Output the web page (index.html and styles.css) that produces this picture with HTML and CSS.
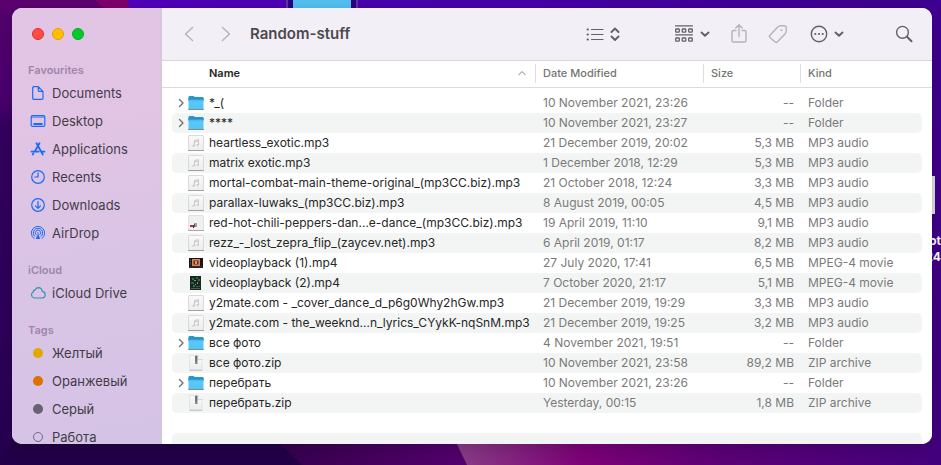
FILE: index.html
```html
<!DOCTYPE html>
<html lang="en">
<head>
<meta charset="utf-8">
<title>Random-stuff</title>
<link rel="stylesheet" href="styles.css">
</head>
<body>
<svg class="wallpaper" viewBox="0 0 941 465" preserveAspectRatio="none" aria-hidden="true">
  <defs>
    <linearGradient id="left" x1="0" y1="0" x2="0" y2="1">
      <stop offset="0" stop-color="#56006f"/><stop offset=".22" stop-color="#4a006e"/><stop offset=".27" stop-color="#34005f"/><stop offset=".8" stop-color="#2c0058"/><stop offset="1" stop-color="#25004f"/>
    </linearGradient>
    <linearGradient id="right" x1="0" y1="0" x2="0" y2="1">
      <stop offset="0" stop-color="#3f0092"/><stop offset="1" stop-color="#42007e"/>
    </linearGradient>
    <linearGradient id="top" x1="0" y1="0" x2="1" y2="0">
      <stop offset="0" stop-color="#5200bd"/><stop offset=".5" stop-color="#4600aa"/><stop offset="1" stop-color="#3e008c"/>
    </linearGradient>
    <linearGradient id="dusk" x1="0" y1="0" x2="1" y2="0">
      <stop offset="0" stop-color="#35004e"/><stop offset="1" stop-color="#55006f"/>
    </linearGradient>
    <linearGradient id="bottom" x1="0" y1="0" x2="1" y2="0">
      <stop offset="0" stop-color="#8a3f88"/><stop offset=".27" stop-color="#7d0078"/><stop offset=".55" stop-color="#5c0078"/><stop offset="1" stop-color="#44007e"/>
    </linearGradient>
  </defs>
  <rect width="941" height="465" fill="url(#left)"/>
  <path d="M0 0H100L110 9H0Z" fill="#5c0070"/>
  <path d="M95 0H130L134 9H105Z" fill="#80006c"/>
  <path d="M127 0H941V20H134Z" fill="url(#top)"/>
  <path d="M915 0H941V465H915Z" fill="url(#right)"/>
  <path d="M12 440H280L305 465H0Z" fill="#230048"/>
  <path d="M276 440H470V465H302Z" fill="url(#dusk)"/>
  <path d="M455 440H941V465H467Z" fill="url(#bottom)"/>
</svg>
<div class="desktop-folder" aria-hidden="true"></div>
<div class="desktop-file" aria-hidden="true"><span class="thumb"></span><span>ot</span><span>24</span></div>

<svg class="symbols" aria-hidden="true">
  <defs>
    <linearGradient id="folderFill" x1="0" y1="0" x2="0" y2="1"><stop offset="0" stop-color="#3fb4ea"/><stop offset=".3" stop-color="#5ac9fa"/><stop offset="1" stop-color="#54c2f5"/></linearGradient>
    <linearGradient id="paper" x1="0" y1="0" x2="0" y2="1"><stop offset="0" stop-color="#fafafa"/><stop offset="1" stop-color="#ececec"/></linearGradient>
  </defs>
  <symbol id="folder" viewBox="0 0 16 16">
    <path d="M.5 2.200Q.5 1 1.500 1H5.500L7 2H14.500Q15.500 2 15.500 3V6H.5Z" fill="#2a98cf"/>
    <path d="M.5 4H15.500V14Q15.500 14.500 15 14.500H1Q.5 14.500 .5 14Z" fill="url(#folderFill)"/>
    <path d="M.5 4H15.500" stroke="#2187bd" fill="none"/>
    <path d="M.5 14.500H15.500" stroke="#788f9c" fill="none"/>
  </symbol>
  <symbol id="audio" viewBox="0 0 16 16">
    <rect x=".5" y=".5" width="15" height="15" rx=".8" fill="url(#paper)" stroke="#dadada"/>
    <path d="M.5 15.500H15.500" stroke="#a0a0a0"/>
    <path d="M6.500 10.500V5.500L10.500 4.700V9.700M6.500 6.800L10.500 6" fill="none" stroke="#c9c9c9"/>
    <ellipse cx="5.600" cy="10.700" rx="1.200" ry=".9" fill="#c9c9c9"/><ellipse cx="9.600" cy="9.900" rx="1.200" ry=".9" fill="#c9c9c9"/>
  </symbol>
  <symbol id="cover" viewBox="0 0 16 16">
    <rect x=".5" y=".5" width="15" height="15" rx=".8" fill="#f2efef" stroke="#e2e0e0"/>
    <path d="M.5 15.500H15.500" stroke="#a8a8a8"/>
    <rect x="2" y="10" width="3" height="2" fill="#b02a61"/><rect x="5" y="10" width="1" height="3" fill="#40363d"/><rect x="6" y="8" width="3" height="4" fill="#9ea1a2"/><rect x="6" y="9" width="1" height="3" fill="#50565a"/>
  </symbol>
  <symbol id="movie" viewBox="0 0 16 16">
    <rect x="1" y="3" width="14" height="10" fill="#1c1513"/><rect x="4" y="4" width="8" height="7" fill="#d78457"/><rect x="5.500" y="5.500" width="5" height="4" fill="#5c3328"/><rect x="7" y="6" width="2" height="3" fill="#c99a82"/><rect x="1" y="11" width="14" height="2" fill="#3b211c"/><rect x="2" y="4" width="1" height="6" fill="#493b37"/>
  </symbol>
  <symbol id="movieGreen" viewBox="0 0 16 16">
    <rect x="2" y="1" width="11" height="14" fill="#14291f"/><path d="M4 3h2v2H4zM10 4h2v2h-2zM5 10h2v2H5z" fill="#316f46"/><path d="M6 5h2v1H6zM9 7h1v2H9zM7 9h1v1H7z" fill="#b58545"/><path d="M3 7h3v2H3zM8 11h4v1H8zM8 2h2v2H8z" fill="#24605d"/><path d="M3 13h9v1H3z" fill="#525f40"/>
  </symbol>
  <symbol id="zip" viewBox="0 0 16 16">
    <path d="M2 .5H10L14 4.500V15H2Z" fill="url(#paper)" stroke="#e2e2e2"/>
    <path d="M10 .5V4.500H14" fill="#fff" stroke="#d6d6d6"/><path d="M2 15.300H14" stroke="#c0c0c0"/>
    <rect x="7" y="1" width="2.500" height="8" fill="#858b90"/><path d="M8.200 1V7" stroke="#4e555a" stroke-dasharray="1 1"/>
  </symbol>
</svg>

<main class="window">
  <aside class="sidebar">
    <div class="lights">
      <button class="light close" aria-label="Close"></button>
      <button class="light minimise" aria-label="Minimise"></button>
      <button class="light zoom" aria-label="Zoom"></button>
    </div>
    <nav aria-label="Sidebar">
      <h2>Favourites</h2>
      <ul>
        <li><a href="#"><svg class="side-icon" viewBox="0 0 16 16"><path d="M3.700 1.700H8.300L13 6.400V13.300Q13 14.300 12 14.300H3.700Q2.700 14.300 2.700 13.300V2.700Q2.700 1.700 3.700 1.700ZM8.300 1.700V5.400Q8.300 6.400 9.300 6.400H13"/></svg>Documents</a></li>
        <li><a href="#"><svg class="side-icon" viewBox="0 0 16 16"><rect x="1.200" y="2.600" width="13.600" height="10.800" rx="1.200"/><path d="M1.700 4.200H14.300" stroke-opacity=".7"/><path d="M4.200 11H11.800" stroke-width="2"/></svg>Desktop</a></li>
        <li><a href="#"><svg class="side-icon" viewBox="0 0 16 16"><path d="M6.500 2.200L12.800 13.500M9.500 2.200L4.600 10.600M3.400 12.600L2.800 13.500M1.500 10.600H8.700M11.600 10.600H14.500" stroke-width="1.800"/></svg>Applications</a></li>
        <li><a href="#"><svg class="side-icon" viewBox="0 0 16 16"><circle cx="8" cy="8" r="6.300"/><path d="M8 3.800V8H4.800"/></svg>Recents</a></li>
        <li><a href="#"><svg class="side-icon" viewBox="0 0 16 16"><circle cx="8" cy="8" r="6.300"/><path d="M8 4.500V11.300M5.500 8.800L8 11.300L10.500 8.800"/></svg>Downloads</a></li>
        <li><a href="#"><svg class="side-icon" viewBox="0 0 16 16"><path d="M4 13.500A6.700 6.700 0 1 1 12 13.500M4.800 11.400A4.700 4.700 0 1 1 11.200 11.400M6 9.600A2.700 2.700 0 1 1 10 9.600" stroke-width="1"/><path d="M8 8.500L5.800 14H10.200Z" class="solid"/><circle cx="8" cy="8" r=".8" class="solid"/></svg>AirDrop</a></li>
      </ul>
      <h2>iCloud</h2>
      <ul>
        <li><a href="#"><svg class="side-icon cloud" viewBox="0 0 16 16"><path d="M4 13A3.200 3.200 0 0 1 3.300 7Q3.200 4.900 5.200 4.800Q6.300 2.700 8.500 2.700Q11.900 2.900 12.200 6.300Q15.300 6.700 15.300 9.800Q15 12.800 12.300 13Z"/></svg>iCloud Drive</a></li>
      </ul>
      <h2>Tags</h2>
      <ul>
        <li><a href="#"><span class="tag yellow"></span>Желтый</a></li>
        <li><a href="#"><span class="tag orange"></span>Оранжевый</a></li>
        <li><a href="#"><span class="tag grey"></span>Серый</a></li>
        <li><a href="#"><span class="tag hollow"></span>Работа</a></li>
      </ul>
    </nav>
  </aside>

  <section class="content">
    <header class="toolbar">
      <div class="history">
        <button class="tool" aria-label="Back"><svg class="faint" width="10" height="16" viewBox="0 0 10 16"><path d="M8.500 1.500L1.500 8L8.500 14.500"/></svg></button>
        <button class="tool" aria-label="Forward"><svg class="faint" width="10" height="16" viewBox="0 0 10 16"><path d="M1.500 1.500L8.500 8L1.500 14.500"/></svg></button>
      </div>
      <h1>Random-stuff</h1>
      <div class="actions">
        <button class="tool view" aria-label="View as list">
          <svg width="18" height="14" viewBox="0 0 18 14"><path d="M5.500 2.500H17M5.500 7.500H17M5.500 12.500H17" stroke-width="1.200"/><path d="M1.500 2.500H2M1.500 7.500H2M1.500 12.500H2" stroke-width="1.800"/></svg>
          <svg width="10" height="14" viewBox="0 0 10 14"><path d="M1.500 5L5 1.500L8.500 5M1.500 9.500L5 13L8.500 9.500" stroke-width="1.900"/></svg>
        </button>
        <button class="tool group" aria-label="Group items">
          <svg width="20" height="18" viewBox="0 0 20 18"><path d="M1.500 .8H18.500M1.500 9.800H18.500" stroke-width="1.200"/><g stroke-width="1.300"><rect x="1.700" y="4" width="3.600" height="3.200" rx=".7"/><rect x="8.200" y="4" width="3.600" height="3.200" rx=".7"/><rect x="14.700" y="4" width="3.600" height="3.200" rx=".7"/><rect x="1.700" y="13" width="3.600" height="3.200" rx=".7"/><rect x="8.200" y="13" width="3.600" height="3.200" rx=".7"/><rect x="14.700" y="13" width="3.600" height="3.200" rx=".7"/></g></svg>
          <svg width="10" height="8" viewBox="0 0 10 8"><path d="M1.500 2.500L5 5.700L8.500 2.500" stroke-width="1.900"/></svg>
        </button>
        <button class="tool share" aria-label="Share"><svg class="faint" width="16" height="20" viewBox="0 0 16 20"><path d="M5 6.500H2.300Q1 6.500 1 7.800V16.700Q1 18 2.300 18H13.700Q15 18 15 16.700V7.800Q15 6.500 13.700 6.500H11M8 12.500V1M4.800 4L8 .8L11.200 4"/></svg></button>
        <button class="tool tags" aria-label="Edit tags"><svg class="faint" width="20" height="20" viewBox="0 0 20 20"><path d="M1.800 11.500L9.800 3Q11 1.700 12.700 1.700H16.200Q18.200 1.700 18.200 3.700V7Q18.200 8.700 17 9.900L9.200 18Q8.200 19 7.200 18L1.900 13.500Q.9 12.500 1.800 11.500Z"/><circle cx="13.500" cy="6.300" r="1" class="solid"/></svg></button>
        <button class="tool more" aria-label="More actions">
          <svg width="18" height="18" viewBox="0 0 18 18"><circle cx="9" cy="9" r="7.700"/><circle cx="5.300" cy="9" r="1.100" class="solid"/><circle cx="9" cy="9" r="1.100" class="solid"/><circle cx="12.700" cy="9" r="1.100" class="solid"/></svg>
          <svg width="10" height="8" viewBox="0 0 10 8"><path d="M1.500 2.500L5 5.700L8.500 2.500" stroke-width="1.900"/></svg>
        </button>
        <button class="tool search" aria-label="Search"><svg width="18" height="18" viewBox="0 0 18 18"><circle cx="7.500" cy="7.300" r="5.900"/><path d="M12 11.800L16.500 16.300" stroke-width="2"/></svg></button>
      </div>
    </header>

    <div class="listing">
      <table>
        <colgroup><col><col class="col-date"><col class="col-size"><col class="col-kind"></colgroup>
        <thead>
          <tr>
            <th scope="col" aria-sort="ascending"><span class="sorted">Name<svg width="8" height="6" viewBox="0 0 8 6"><path d="M.8 4.800L4 1.500L7.200 4.800"/></svg></span></th>
            <th scope="col">Date Modified</th><th scope="col">Size</th><th scope="col">Kind</th>
          </tr>
        </thead>
        <tbody>
          <tr><td><div class="name"><svg class="arrow" viewBox="0 0 6 10"><path d="M1.500 1.500L5 5L1.500 8.500"/></svg><svg class="file-icon"><use href="#folder"/></svg>*_(</div></td><td>10 November 2021, 23:26</td><td>--</td><td>Folder</td></tr>
          <tr><td><div class="name"><svg class="arrow" viewBox="0 0 6 10"><path d="M1.500 1.500L5 5L1.500 8.500"/></svg><svg class="file-icon"><use href="#folder"/></svg>****</div></td><td>10 November 2021, 23:27</td><td>--</td><td>Folder</td></tr>
          <tr><td><div class="name"><svg class="file-icon"><use href="#audio"/></svg>heartless_exotic.mp3</div></td><td>21 December 2019, 20:02</td><td>5,3 MB</td><td>MP3 audio</td></tr>
          <tr><td><div class="name"><svg class="file-icon"><use href="#audio"/></svg>matrix exotic.mp3</div></td><td>1 December 2018, 12:29</td><td>5,3 MB</td><td>MP3 audio</td></tr>
          <tr><td><div class="name"><svg class="file-icon"><use href="#audio"/></svg>mortal-combat-main-theme-original_(mp3CC.biz).mp3</div></td><td>21 October 2018, 12:24</td><td>3,3 MB</td><td>MP3 audio</td></tr>
          <tr><td><div class="name"><svg class="file-icon"><use href="#audio"/></svg>parallax-luwaks_(mp3CC.biz).mp3</div></td><td>8 August 2019, 00:05</td><td>4,5 MB</td><td>MP3 audio</td></tr>
          <tr><td><div class="name"><svg class="file-icon"><use href="#cover"/></svg>red-hot-chili-peppers-dan…e-dance_(mp3CC.biz).mp3</div></td><td>19 April 2019, 11:10</td><td>9,1 MB</td><td>MP3 audio</td></tr>
          <tr><td><div class="name"><svg class="file-icon"><use href="#audio"/></svg>rezz_-_lost_zepra_flip_(zaycev.net).mp3</div></td><td>6 April 2019, 01:17</td><td>8,2 MB</td><td>MP3 audio</td></tr>
          <tr><td><div class="name"><svg class="file-icon"><use href="#movie"/></svg>videoplayback (1).mp4</div></td><td>27 July 2020, 17:41</td><td>6,5 MB</td><td>MPEG-4 movie</td></tr>
          <tr><td><div class="name"><svg class="file-icon"><use href="#movieGreen"/></svg>videoplayback (2).mp4</div></td><td>7 October 2020, 21:17</td><td>5,1 MB</td><td>MPEG-4 movie</td></tr>
          <tr><td><div class="name"><svg class="file-icon"><use href="#audio"/></svg>y2mate.com - _cover_dance_d_p6g0Why2hGw.mp3</div></td><td>21 December 2019, 19:29</td><td>3,3 MB</td><td>MP3 audio</td></tr>
          <tr><td><div class="name"><svg class="file-icon"><use href="#audio"/></svg>y2mate.com - the_weeknd…n_lyrics_CYykK-nqSnM.mp3</div></td><td>21 December 2019, 19:25</td><td>3,2 MB</td><td>MP3 audio</td></tr>
          <tr><td><div class="name"><svg class="arrow" viewBox="0 0 6 10"><path d="M1.500 1.500L5 5L1.500 8.500"/></svg><svg class="file-icon"><use href="#folder"/></svg>все фото</div></td><td>4 November 2021, 19:51</td><td>--</td><td>Folder</td></tr>
          <tr><td><div class="name"><svg class="file-icon"><use href="#zip"/></svg>все фото.zip</div></td><td>10 November 2021, 23:58</td><td>89,2 MB</td><td>ZIP archive</td></tr>
          <tr><td><div class="name"><svg class="arrow" viewBox="0 0 6 10"><path d="M1.500 1.500L5 5L1.500 8.500"/></svg><svg class="file-icon"><use href="#folder"/></svg>перебрать</div></td><td>10 November 2021, 23:26</td><td>--</td><td>Folder</td></tr>
          <tr><td><div class="name"><svg class="file-icon"><use href="#zip"/></svg>перебрать.zip</div></td><td>Yesterday, 00:15</td><td>1,8 MB</td><td>ZIP archive</td></tr>
          <tr><td></td><td></td><td></td><td></td></tr>
          <tr><td></td><td></td><td></td><td></td></tr>
        </tbody>
      </table>
    </div>
  </section>
</main>
</body>
</html>
```

FILE: styles.css
```css
* { box-sizing: border-box; }

body {
  margin: 0;
  height: 100vh;
  padding: 8px 9px 21px 12px;
  overflow: hidden;
  background: #2c0058;
  font-family: Inter, "Liberation Sans", sans-serif;
  font-size: 12px;
  color: #262626;
}

h1, h2, ul { margin: 0; padding: 0; }
ul { list-style: none; }
button { margin: 0; padding: 0; border: 0; background: none; }
svg { display: block; flex: none; fill: none; stroke-linecap: round; stroke-linejoin: round; }
.solid { fill: currentColor; stroke: none; }
.symbols { position: absolute; width: 0; height: 0; }

/* Desktop behind the window */
.wallpaper { position: absolute; inset: 0; width: 100%; height: 100%; }
.desktop-folder {
  position: absolute;
  top: 0;
  left: 286px;
  width: 72px;
  height: 20px;
  border: 2px solid #5b3a9c;
  border-width: 0 2px;
  background: linear-gradient(90deg, #2d0086 5px, #55c3f4 5px, #55c3f4 63px, #2d0086 63px);
}
.desktop-file {
  position: absolute;
  top: 176px;
  right: 0;
  display: flex;
  flex-direction: column;
  align-items: flex-end;
  color: #fff;
  font-size: 12px;
  line-height: 16px;
  font-weight: 700;
}
.desktop-file .thumb {
  width: 20px;
  height: 38px;
  margin: 0 6px 19px 0;
  background: #e2e0e6;
}

.window {
  position: relative;
  display: flex;
  height: 100%;
  overflow: hidden;
  border-radius: 10px;
  background: #fff;
  box-shadow: 0 4px 20px rgba(0, 0, 0, .2);
}

/* Sidebar */
.sidebar {
  flex: none;
  width: 150px;
  padding: 20px 0 0 16px;
  border-right: 1px solid #d2c6d8;
  background: linear-gradient(170deg, #e2c4e4 0%, #e1c4e4 30%, #d9c4e5 60%, #d5c3e5 100%);
  overflow: hidden;
}
.lights { display: flex; gap: 8px; padding-left: 4px; }
.light { width: 12px; height: 12px; border: 1px solid; border-radius: 50%; }
.close { background: #ff4d45; border-color: #e52b26; }
.minimise { background: #ffbd00; border-color: #e2a000; }
.zoom { background: #00cb2c; border-color: #00ad22; }

.sidebar h2 {
  height: 19px;
  margin-top: 13px;
  font-size: 11px;
  line-height: 20px;
  font-weight: 600;
  color: #a085ab;
}
.sidebar h2:first-child { margin-top: 20px; }
.sidebar a {
  display: flex;
  align-items: center;
  gap: 6px;
  height: 28px;
  padding-left: 2px;
  color: #433c48;
  font-size: 13px;
  text-decoration: none;
}
.side-icon { width: 16px; height: 16px; color: #1a6cf5; stroke: currentColor; stroke-width: 1.200; }
.cloud { color: #2e92b8; }
.tag { width: 10px; height: 10px; margin: 0 3px; border-radius: 50%; }
.yellow { background: #e2a800; }
.orange { background: #e27000; }
.grey { background: #696075; }
.hollow { border: 1px solid #756a80; }

/* Toolbar */
.content { flex: 1; min-width: 0; display: flex; flex-direction: column; }
.toolbar {
  flex: none;
  display: flex;
  align-items: center;
  height: 53px;
  padding: 0 19px 0 22px;
  border-bottom: 1px solid #d8d4da;
  background: #f3eff6;
}
.history { display: flex; gap: 27px; margin-right: 19px; }
.toolbar h1 { font-size: 15px; line-height: 20px; font-weight: 600; color: #4c494e; }
.actions { display: flex; align-items: center; margin-left: auto; }
.tool { display: flex; align-items: center; gap: 6px; color: #646067; }
.tool svg { stroke: currentColor; stroke-width: 1.400; }
.tool .faint { color: #b6b2b9; }
.group { margin-left: 54px; }
.share { margin-left: 21px; }
.tags { margin-left: 21px; }
.more { margin-left: 22px; }
.search { margin-left: 51px; }

/* File list */
.listing {
  flex: 1;
  min-height: 0;
  padding: 0 10px;
  overflow: hidden;
  background: linear-gradient(#dcdcdc, #dcdcdc) 0 26px / 100% 1px no-repeat #fff;
}
table { width: 100%; table-layout: fixed; border-spacing: 0; }
.col-date { width: 168px; }
.col-size { width: 97px; }
.col-kind { width: 122px; }
th {
  height: 27px;
  padding: 0 8px 3px;
  font-size: 11px;
  font-weight: 500;
  text-align: left;
  color: #757575;
  background: linear-gradient(#dedede, #dedede) 0 3px / 1px 19px no-repeat;
}
th:first-child { padding: 0 9px 3px 37px; background: none; font-weight: 600; color: #262626; }
.sorted { display: flex; align-items: center; justify-content: space-between; }
.sorted svg { stroke: #808080; }
tbody::before { content: ""; display: table-row; height: 5px; }
td { height: 20px; padding: 0 8px; line-height: 20px; white-space: nowrap; color: #7a7a7a; }
td:first-child { padding: 0; color: #262626; border-radius: 5px 0 0 5px; }
td:nth-child(3) { padding-right: 6px; text-align: right; }
td:last-child { border-radius: 0 5px 5px 0; }
tbody tr:nth-child(even) td { background: #f3f5f4; }
.name { display: flex; align-items: center; height: 20px; padding-left: 6px; }
.arrow { width: 6px; height: 10px; margin-right: 4px; stroke: #707070; stroke-width: 1.400; }
.file-icon { width: 16px; height: 16px; margin-right: 5px; }
.file-icon:first-child { margin-left: 10px; }
```
